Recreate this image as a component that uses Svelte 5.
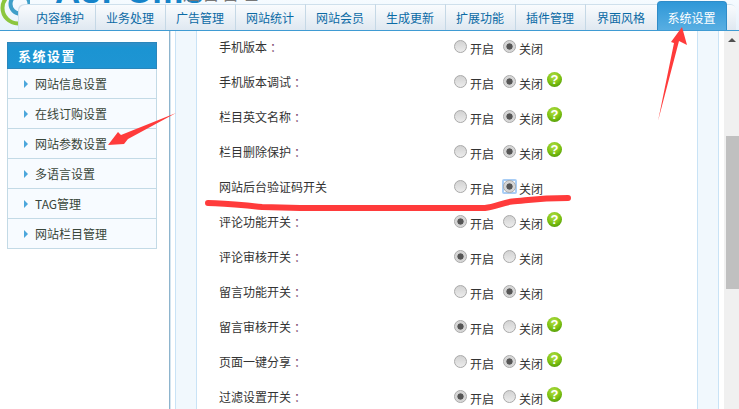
<script>
  const tabs = ['内容维护','业务处理','广告管理','网站统计','网站会员','生成更新','扩展功能','插件管理','界面风格','系统设置'];
  const menu = ['网站信息设置','在线订购设置','网站参数设置','多语言设置','TAG管理','网站栏目管理'];
  const rows = [
    { label:'手机版本', on:false, help:false },
    { label:'手机版本调试', on:false, help:true },
    { label:'栏目英文名称', on:false, help:true },
    { label:'栏目删除保护', on:false, help:true },
    { label:'网站后台验证码开关', on:false, help:false, plain:true, focus:true },
    { label:'评论功能开关', on:true, help:true },
    { label:'评论审核开关', on:true, help:false },
    { label:'留言功能开关', on:false, help:false },
    { label:'留言审核开关', on:true, help:true },
    { label:'页面一键分享', on:false, help:true },
    { label:'过滤设置开关', on:true, help:true }
  ];
</script>

<div class="page">
  <header class="top">
    <div class="logo">
      <svg class="ring" width="30" height="31" viewBox="0 0 30 31" aria-hidden="true">
        <circle cx="18" cy="8" r="15.500" fill="none" stroke="#8cc63f" stroke-width="4"/>
        <circle cx="20" cy="4" r="9.500" fill="none" stroke="#3f9fc9" stroke-width="4"/>
      </svg>
      <span class="brand">AsPCms</span>
      <span class="sub">后台管理</span>
    </div>
    <nav class="tabs">
      {#each tabs as t, i}
        <a class="tab" class:active={i === tabs.length - 1}>{t}</a>
      {/each}
    </nav>
  </header>

  <div class="main">
    <aside class="side">
      <h2>系统设置</h2>
      <ul>
        {#each menu as m}
          <li><i class="tri"></i>{m}</li>
        {/each}
      </ul>
    </aside>
    <div class="split"></div>
    <div class="strip left"></div>
    <section class="content">
      {#each rows as r, i}
        <div class="row">
          <span class="label">{r.label}{#if !r.plain}<b>：</b>{/if}</span>
          <span class="opts">
            <label class="opt"><input type="radio" name={'r'+i} checked={r.on} /><span>开启</span></label>
            <label class="opt" class:focus={r.focus}><input type="radio" name={'r'+i} checked={!r.on} /><span>关闭</span></label>
            {#if r.help}
              <svg class="help" width="15" height="15" viewBox="0 0 15 15" aria-hidden="true">
                <defs>
                  <radialGradient id={'g'+i} cx="45%" cy="30%" r="75%">
                    <stop offset="0" stop-color="#b4e04a"/>
                    <stop offset="0.6" stop-color="#7fc212"/>
                    <stop offset="1" stop-color="#4f9a08"/>
                  </radialGradient>
                </defs>
                <circle cx="7.500" cy="7.500" r="7.500" fill={'url(#g'+i+')'}/>
                <text x="7.500" y="12" text-anchor="middle" class="q">?</text>
              </svg>
            {/if}
          </span>
        </div>
      {/each}
    </section>
    <div class="strip right"></div>
    <div class="scroll">
      <i class="up"></i>
      <i class="thumb"></i>
    </div>
  </div>

  <svg class="marks" width="739" height="409" viewBox="0 0 739 409" aria-hidden="true">
    <polygon points="108,145 118,132 121,135 176,113 128,139 124,144" fill="#ff3b3b"/>
    <polygon points="682,27 687,45 679,41 658,121 674,43 671,42" fill="#ff3b3b"/>
    <path d="M208 203 C225 203 240 205 262 207 L300 208 L485 208 C495 207 502 203 512 201.500 C525 201 535 198 568 198" fill="none" stroke="#ff3b3b" stroke-width="6" stroke-linecap="round" stroke-linejoin="round"/>
  </svg>
</div>

<style>
  :global(body) { margin: 0; }
  .page {
    position: relative;
    width: 739px;
    height: 409px;
    overflow: hidden;
    background: #fff;
    display: flex;
    flex-direction: column;
    font-family: "Noto Sans CJK SC", "Liberation Sans", sans-serif;
    font-size: 12px;
    color: #333;
  }
  .top {
    position: relative;
    height: 30px;
    flex: none;
    border-bottom: 1px solid #3f9bd3;
    background: linear-gradient(#f6fbff, #e6f2fb);
    overflow: hidden;
  }
  .logo {
    position: absolute;
    inset: 0;
    overflow: hidden;
  }
  .ring { position: absolute; left: 0; top: 0; }
  .brand {
    position: absolute;
    left: 55px;
    bottom: 21px;
    font: bold 35px/37px "Liberation Sans", sans-serif;
    color: #1583c9;
    letter-spacing: 1px;
  }
  .sub {
    position: absolute;
    left: 183px;
    bottom: 28px;
    font-size: 18px;
    line-height: 20px;
    color: #777;
    letter-spacing: 1px;
  }
  .tabs {
    position: absolute;
    left: 18px;
    right: 3px;
    top: 4px;
    bottom: 0;
    display: flex;
    padding-left: 8px;
    background: linear-gradient(#fafcfe, #dfe8f1);
    border-radius: 6px 6px 0 0;
    box-shadow: inset 1px 1px 0 #cfe0ec;
  }
  .tab {
    width: 70px;
    flex: none;
    box-sizing: border-box;
    border-right: 1px solid #c5d8e6;
    text-align: center;
    line-height: 28px;
    color: #0b6aa5;
    padding-right: 1px;
  }
  .tab:nth-last-child(2) { border-right: 0; width: 71px; }
  .tab.active {
    margin-top: -3px;
    height: 29px;
    line-height: 32px;
    background: linear-gradient(#2f98d8, #58aee2);
    border: 1px solid #2f8cc8;
    border-bottom: 0;
    border-radius: 4px 4px 0 0;
    color: #fff;
  }

  .main {
    flex: 1;
    min-height: 0;
    display: flex;
    background: #fff;
  }
  .side {
    width: 150px;
    flex: none;
    margin: 11px 12px 0 7px;
    align-self: flex-start;
    box-sizing: border-box;
    border: 1px solid #c3dae6;
    border-top: 0;
    background: #f7fbff;
  }
  .side h2 {
    margin: 0 -1px;
    height: 27px;
    box-sizing: border-box;
    padding-left: 10px;
    background: linear-gradient(#2f8fc9 0, #1b94d2 20%, #1f95d3 100%);
    border: 1px solid #2a86bb;
    color: #fff;
    font-size: 13px;
    line-height: 26px;
    letter-spacing: 1.500px;
    font-weight: 700;
  }
  .side ul { list-style: none; margin: 0; padding: 0; }
  .side li {
    height: 30px;
    box-sizing: border-box;
    border-bottom: 1px solid #c3dae6;
    line-height: 29px;
    padding-left: 16px;
    color: #39463a;
    display: flex;
    align-items: center;
    gap: 7px;
  }
  .side li:last-child { border-bottom: 0; height: 29px; }
  .tri {
    width: 0;
    height: 0;
    border-left: 4px solid #4aa6dc;
    border-top: 4px solid transparent;
    border-bottom: 4px solid transparent;
  }
  .split {
    width: 1px;
    flex: none;
    background: #8db4cd;
    box-shadow: 1px 0 0 #d4e4ef;
  }
  .strip {
    flex: none;
    box-sizing: border-box;
    background: #f1f8fd;
    border: solid #c9e3f6;
    border-width: 0 1px;
  }
  .strip.left { width: 22px; margin-left: 5px; }
  .strip.right { width: 22px; }
  .content {
    width: 500px;
    flex: none;
    margin-top: -2px;
  }
  .row {
    height: 35px;
    display: flex;
    align-items: center;
    padding-left: 22px;
    box-sizing: border-box;
  }
  .label { width: 235px; flex: none; color: #333; }
  .label b { font-weight: 400; color: #7b4a6d; margin-left: 3px; }
  .opts { display: flex; align-items: center; margin-top: 1px; }
  .opt { display: flex; align-items: center; width: 49px; position: relative; }
  .opt span { margin-left: 3px; padding-top: 3px; line-height: 16px; }
  .opt input {
    appearance: none;
    -webkit-appearance: none;
    width: 13px;
    height: 13px;
    margin: 0;
    border-radius: 50%;
    border: 1px solid #a9a9a9;
    background: linear-gradient(#d2d2d2, #ececec);
    box-sizing: border-box;
    position: relative;
    top: -1px;
  }
  .opt input:checked {
    background: radial-gradient(circle, #555 0 2.800px, #d0d0d0 3.400px, #e6e6e6 100%);
  }
  .opt.focus::before {
    content: "";
    position: absolute;
    left: -1px;
    top: 1px;
    width: 11px;
    height: 11px;
    border: 2px solid #a8cdf5;
    border-radius: 2px;
  }
  .help { margin: -6px 0 0 -5px; }
  .q { font: 700 13px "Liberation Sans", sans-serif; fill: #fff; }
  .scroll {
    position: relative;
    flex: none;
    width: 15px;
    margin-left: 5px;
    background: #f0f0f0;
  }
  .up {
    position: absolute;
    left: 4px;
    top: 7px;
    border: 4px solid transparent;
    border-top: 0;
    border-bottom: 4px solid #505050;
  }
  .thumb {
    position: absolute;
    left: 2px;
    right: 0;
    top: 105px;
    height: 153px;
    background: #c0c0c0;
  }
  .marks { position: absolute; left: 0; top: 0; pointer-events: none; }
</style>
